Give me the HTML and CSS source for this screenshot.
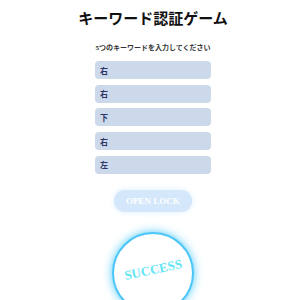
FILE: index.html
```html
<!DOCTYPE html>
<html lang="ja">

<head>
    <meta charset="UTF-8">
    <title>キーワード認証ゲーム</title>
    <link rel="stylesheet" href="styles.css">
</head>

<body>
    <div class="container">
        <h1>キーワード認証ゲーム</h1>
        <p class="hint">5つのキーワードを入力してください</p>

        <div class="inputs">
            <input type="text" value="右">
            <input type="text" value="右">
            <input type="text" value="下">
            <input type="text" value="右">
            <input type="text" value="左">
        </div>

        <button class="open-btn">OPEN LOCK</button>

        <div class="lock">
            <span class="result">SUCCESS</span>
        </div>
    </div>
</body>

</html>
```

FILE: styles.css
```css
body {
    margin: 0;
    font-family: "Liberation Serif", "Noto Sans CJK JP", serif;
    background: #fff;
    overflow: hidden;
}

.container {
    display: flex;
    flex-direction: column;
    align-items: center;
    padding-left: 6px;
}

h1 {
    margin: 8px 0 0;
    font-size: 15px;
    line-height: 22px;
    font-weight: bold;
    color: #111;
}

.hint {
    margin: 13px 0 8px;
    font-size: 7px;
    line-height: 10px;
    font-weight: bold;
    color: #333;
}

.inputs {
    display: flex;
    flex-direction: column;
    gap: 5.7px;
}

.inputs input {
    width: 116px;
    height: 18px;
    box-sizing: border-box;
    padding: 0 5px;
    border: none;
    border-radius: 4px;
    background-color: #ccd9ea;
    font-family: inherit;
    font-size: 8px;
    font-weight: bold;
    color: #2b3466;
}

.open-btn {
    margin-top: 16px;
    width: 78px;
    height: 22px;
    border: none;
    border-radius: 11px;
    background-color: #d4e7fb;
    box-shadow: 0 0 6px #dceefe;
    color: #fff;
    font-family: inherit;
    font-size: 9px;
    font-weight: bold;
}

.lock {
    margin-top: 20px;
    width: 82px;
    height: 82px;
    box-sizing: border-box;
    border: 2px solid #4cc6f6;
    border-radius: 50%;
    background: #fff;
    box-shadow: 0 0 10px #4fcaf8;
    display: flex;
    justify-content: center;
    align-items: center;
}

.result {
    margin-bottom: 6px;
    transform: rotate(-12deg);
    color: #62e6f6;
    font-size: 13px;
    font-weight: bold;
}
```
